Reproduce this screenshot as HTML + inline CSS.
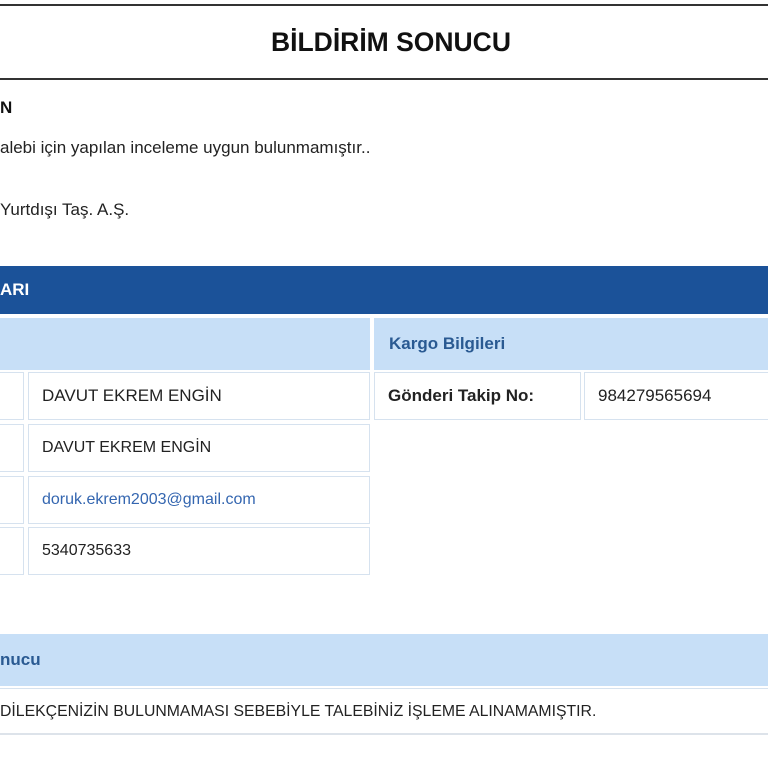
<!DOCTYPE html>
<html><head><meta charset="utf-8"><style>
*{margin:0;padding:0;box-sizing:border-box}
body{width:768px;height:768px;overflow:hidden;background:#fff;font-family:"Liberation Sans",Arial,sans-serif;color:#222;position:relative}
.a{position:absolute}
.cell{position:absolute;border:1px solid #d6e2ef;background:#fff;font-size:17px;display:flex;align-items:center;padding-left:13px}
</style></head><body>
<div class="a" style="left:0;top:4px;width:768px;height:2px;background:#333"></div>
<div class="a" style="left:0;top:78px;width:768px;height:2px;background:#333"></div>
<div class="a" style="left:271px;top:27px;font-size:26.5px;font-weight:bold;color:#111">BİLDİRİM SONUCU</div>
<div class="a" style="left:0;top:98px;font-size:17px;font-weight:bold;color:#111">N</div>
<div class="a" style="left:0;top:138px;font-size:17px">alebi için yapılan inceleme uygun bulunmamıştır..</div>
<div class="a" style="left:0;top:200px;font-size:17px">Yurtdışı Taş. A.Ş.</div>
<div class="a" style="left:0;top:266px;width:768px;height:48px;background:#1b5299;color:#fff;font-weight:bold;font-size:17px;line-height:48px">ARI</div>
<div class="a" style="left:0;top:318px;width:370px;height:52px;background:#c7dff7"></div>
<div class="a" style="left:374px;top:318px;width:394px;height:52px;background:#c7dff7;color:#2a5a92;font-weight:bold;font-size:17px;line-height:52px;padding-left:15px">Kargo Bilgileri</div>
<div class="cell" style="left:-2px;top:372px;width:26px;height:48px"></div>
<div class="cell" style="left:28px;top:372px;width:342px;height:48px">DAVUT EKREM ENGİN</div>
<div class="cell" style="left:-2px;top:424px;width:26px;height:48px"></div>
<div class="cell" style="left:28px;top:424px;width:342px;height:48px;font-size:16px">DAVUT EKREM ENGİN</div>
<div class="cell" style="left:-2px;top:476px;width:26px;height:48px"></div>
<div class="cell" style="left:28px;top:476px;width:342px;height:48px;color:#3466b0;font-size:16px">doruk.ekrem2003@gmail.com</div>
<div class="cell" style="left:-2px;top:527px;width:26px;height:48px"></div>
<div class="cell" style="left:28px;top:527px;width:342px;height:48px;font-size:16px">5340735633</div>
<div class="cell" style="left:374px;top:372px;width:207px;height:48px;font-weight:bold">Gönderi Takip No:</div>
<div class="cell" style="left:584px;top:372px;width:190px;height:48px">984279565694</div>
<div class="a" style="left:0;top:634px;width:768px;height:52px;background:#c7dff7;color:#2a5a92;font-weight:bold;font-size:17px;line-height:52px">nucu</div>
<div class="a" style="left:0;top:688px;width:768px;height:47px;border-top:1px solid #d6e2ef;border-bottom:2px solid #dde3ea;font-size:15.8px;line-height:46px">DİLEKÇENİZİN BULUNMAMASI SEBEBİYLE TALEBİNİZ İŞLEME ALINAMAMIŞTIR.</div>
</body></html>
